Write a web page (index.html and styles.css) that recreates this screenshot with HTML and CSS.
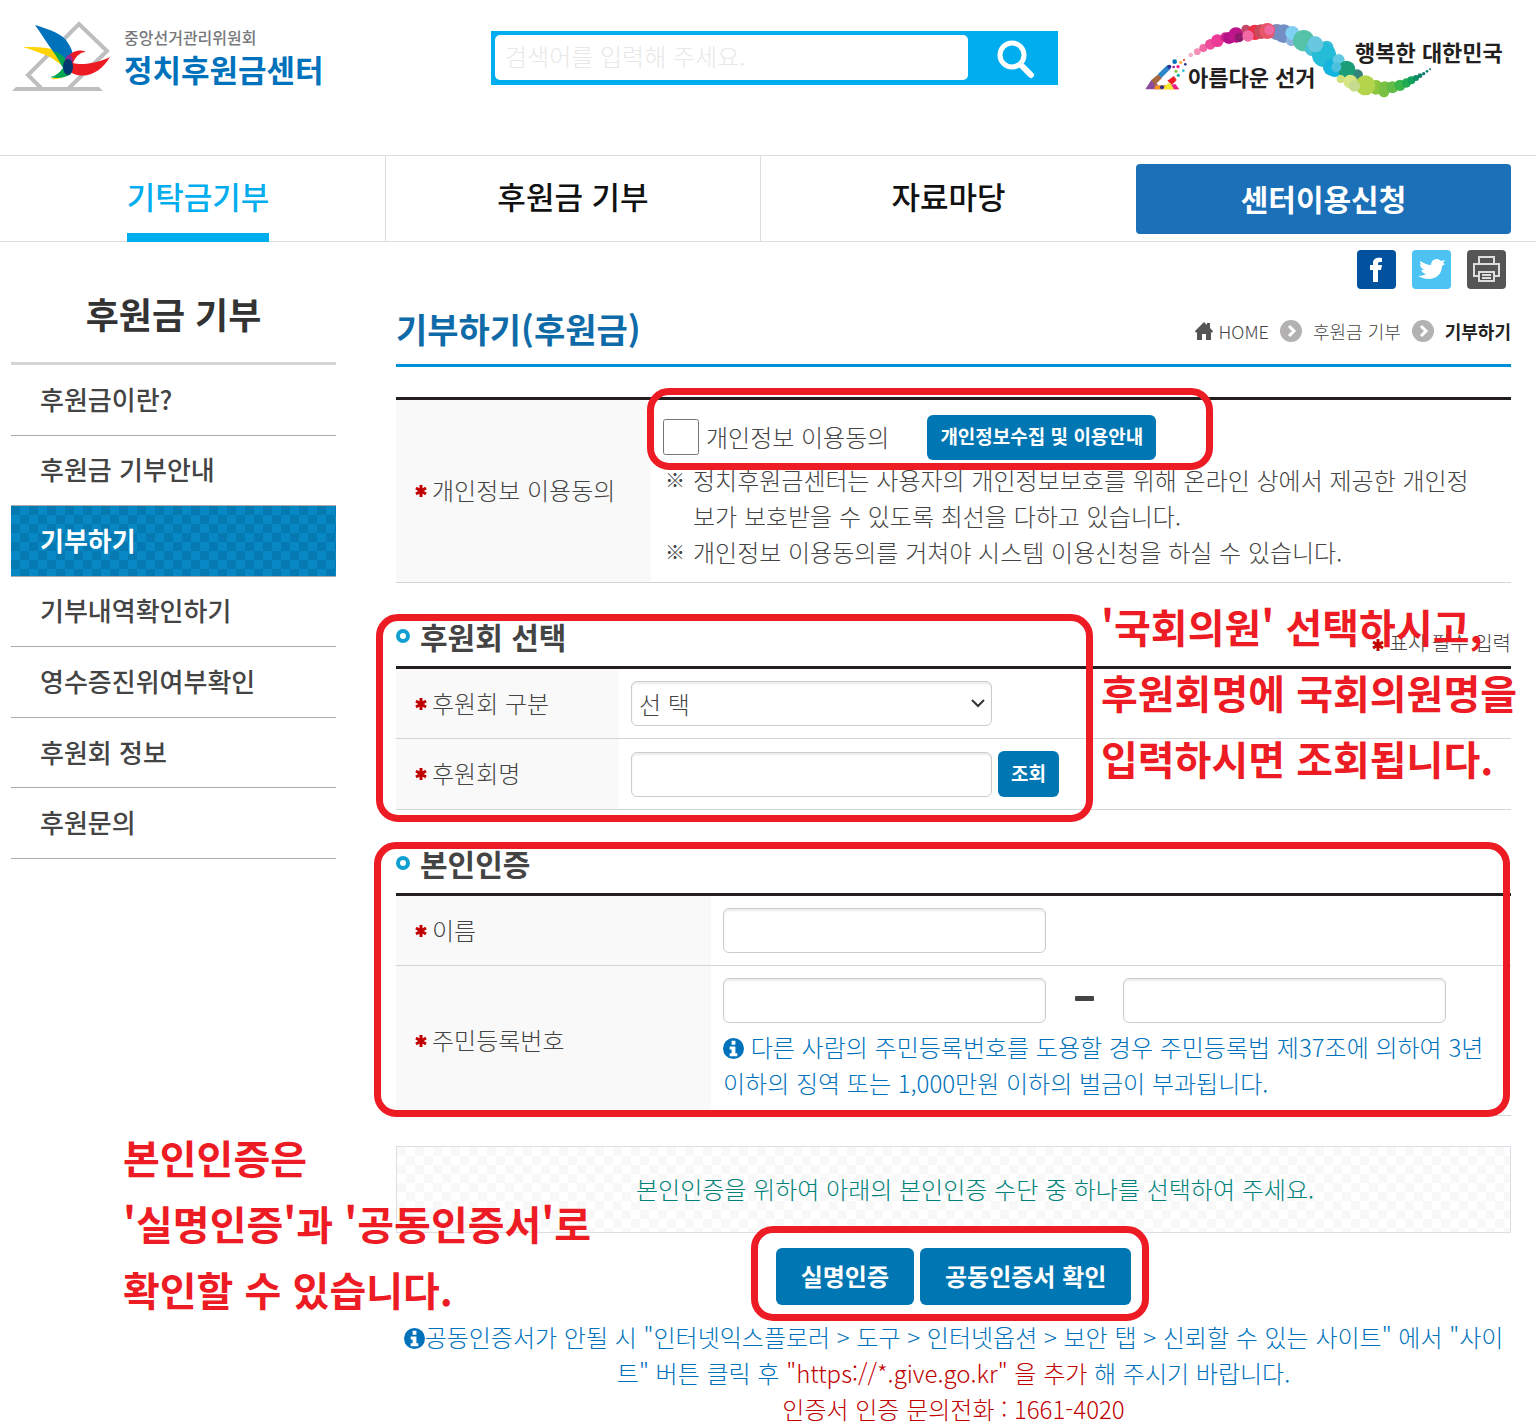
FILE: index.html
```
<!DOCTYPE html>
<html lang="ko">
<head>
    <meta charset="UTF-8">
    <meta name="viewport" content="width=device-width, initial-scale=1.0">
    <title>정치후원금센터 - 기부하기</title>
    <link rel="stylesheet" href="styles.css">
</head>
<body>
    <!-- 공통 아이콘 -->
    <svg class="symbols" aria-hidden="true">
        <symbol id="ico-star" viewBox="0 0 14 14">
            <path d="M7 1v12M2 4l10 6M12 4L2 10" stroke="#c00000" stroke-width="3" fill="none"/>
        </symbol>
        <symbol id="ico-info" viewBox="0 0 22 22">
            <circle cx="11" cy="11" r="11" fill="#0072bc"/>
            <path d="M9 3h4v4H9zM7 9h6v7h2v3H7v-3h2v-4H7z" fill="#fff"/>
        </symbol>
        <symbol id="ico-next" viewBox="0 0 22 22">
            <circle cx="11" cy="11" r="11" fill="#b3b1b2"/>
            <path d="M9 6l5 5-5 5" stroke="#fff" stroke-width="3" fill="none"/>
        </symbol>
        <symbol id="ico-ring" viewBox="0 0 14 14">
            <circle cx="7" cy="7" r="5" stroke="#0f9fd0" stroke-width="4" fill="#fff"/>
        </symbol>
    </svg>

    <header class="header">
        <a class="logo" href="#">
            <svg width="101" height="74" viewBox="10 20 101 74" aria-hidden="true">
                <path d="M40 88L27 75 78 24l28 27-38 37" fill="none" stroke="#bdbec0" stroke-width="4"/>
                <path d="M11 91l4-4h83l4 4z" fill="#bdbec0"/>
                <path d="M22 47c14 0 26 0 34 4 7 4 10 9 11 17-5-1-10-6-18-11-8-4-18-7-27-10z" fill="#ffd400"/>
                <path d="M34 25c16 5 28 9 33 18 4 6 5 10 5 15l-8 10c-3-6-8-11-13-18-6-8-11-17-17-25z" fill="#0072bc"/>
                <path d="M50 79c6 1 12-1 18-6l-5-4c-3 5-7 8-13 10z" fill="#ffd400"/>
                <path d="M49 77c6-1 9-4 13-9-3-5-5-10-10-17 8 2 13 7 15 13l3 10c-6 4-14 5-21 3z" fill="#00a651"/>
                <path d="M65 60c3-7 12-12 20-8-6 0-10 4-13 11 10 3 27-1 37-6-8 14-22 22-36 17-6-2-8-8-8-14z" fill="#ed1c24"/>
                <path d="M66 56c3-3 6 0 6 6-4-1-6 0-9 4 0-4 1-7 3-10z" fill="#92278f"/>
                <ellipse cx="67" cy="67" rx="5" ry="8" fill="#003a70"/>
            </svg>
            <span class="logo-text">
                <span class="logo-org">중앙선거관리위원회</span>
                <strong class="logo-name">정치후원금센터</strong>
            </span>
        </a>

        <form class="search">
            <input type="text" aria-label="검색어" placeholder="검색어를 입력해 주세요.">
            <button type="button" aria-label="검색">
                <svg width="40" height="40" viewBox="0 0 40 40">
                    <circle cx="16" cy="16" r="12" fill="none" stroke="#fff" stroke-width="5"/>
                    <path d="M25 26l10 10" stroke="#fff" stroke-width="6" stroke-linecap="round"/>
                </svg>
            </button>
        </form>

        <svg class="slogan" width="381" height="100" viewBox="0 0 381 100">
            <svg width="381" height="100" viewBox="0 0 1143 300">
                <circle cx="182" cy="135" r="7" fill="#f7b2cf"/>
                <circle cx="202" cy="125" r="10" fill="#f48fb8"/>
                <circle cx="220" cy="114" r="12" fill="#f26aa5"/>
                <circle cx="241" cy="103" r="16" fill="#ee4b9b"/>
                <circle cx="262" cy="92" r="19" fill="#ec3a96"/>
                <circle cx="286" cy="82" r="15" fill="#d4268c"/>
                <circle cx="297" cy="84" r="18" fill="#b5128a"/>
                <circle cx="318" cy="75" r="23" fill="#c0148c"/>
                <circle cx="328" cy="82" r="14" fill="#8e1a6b"/>
                <circle cx="348" cy="58" r="14" fill="#c2486a"/>
                <circle cx="375" cy="67" r="23" fill="#ee2f45"/>
                <circle cx="354" cy="78" r="17" fill="#f26aa5"/>
                <circle cx="394" cy="65" r="22" fill="#c94a5c"/>
                <circle cx="440" cy="66" r="24" fill="#8088b8"/>
                <circle cx="412" cy="63" r="24" fill="#ea5468"/>
                <circle cx="418" cy="60" r="15" fill="#f068a0"/>
                <circle cx="461" cy="71" r="28" fill="#728ec2"/>
                <circle cx="484" cy="92" r="16" fill="#8cb2e0"/>
                <circle cx="487" cy="69" r="21" fill="#80d0f4"/>
                <circle cx="521" cy="92" r="32" fill="#55c3a8"/>
                <circle cx="545" cy="118" r="20" fill="#48c0d8"/>
                <circle cx="590" cy="112" r="20" fill="#38bcd8"/>
                <circle cx="582" cy="135" r="36" fill="#25bcd8"/>
                <circle cx="556" cy="103" r="24" fill="#68c8e0"/>
                <circle cx="604" cy="172" r="25" fill="#18b4dc"/>
                <circle cx="615" cy="175" r="26" fill="#12b5df"/>
                <circle cx="626" cy="150" r="18" fill="#62c9e2"/>
                <circle cx="682" cy="195" r="17" fill="#36857c"/>
                <circle cx="650" cy="178" r="26" fill="#1b9e77"/>
                <circle cx="619" cy="172" r="15" fill="#4bc0df"/>
                <circle cx="632" cy="207" r="12" fill="#cfe07a"/>
                <circle cx="661" cy="215" r="21" fill="#d8e583"/>
                <circle cx="738" cy="232" r="22" fill="#8cc63f"/>
                <circle cx="706" cy="226" r="30" fill="#b4d44c"/>
                <circle cx="673" cy="228" r="17" fill="#c5dc90"/>
                <circle cx="762" cy="246" r="16" fill="#79c143"/>
                <circle cx="765" cy="232" r="18" fill="#78c043"/>
                <circle cx="787" cy="232" r="18" fill="#62bb46"/>
                <circle cx="810" cy="226" r="17" fill="#39b54a"/>
                <circle cx="829" cy="219" r="14" fill="#22aa50"/>
                <circle cx="844" cy="211" r="12" fill="#12a15c"/>
                <circle cx="858" cy="204" r="9" fill="#0c8f62"/>
                <circle cx="870" cy="197" r="7" fill="#0b8069"/>
                <circle cx="881" cy="191" r="5" fill="#0b7a70"/>
                <circle cx="891" cy="184" r="4" fill="#0b7a70"/>
                <circle cx="900" cy="178" r="3" fill="#0b7a70"/>
                <path d="M46 238l18-28 14 8 16 20z" fill="#8b4a9c"/>
                <path d="M64 210l22-18 10 12-22 22z" fill="#a5673f"/>
                <path d="M84 192l28-27 10 11-28 28z" fill="#2a86c8"/>
                <path d="M76 226h50l22 12H72z" fill="#f7941d"/>
                <path d="M98 238l18-20 14 10 8 10z" fill="#f5e72a"/>
                <path d="M112 212l20-14 8 12-14 14z" fill="#ed1c24"/>
                <path d="M124 224l12-2 12 16h-16z" fill="#ec1c8c"/>
                <circle cx="96" cy="232" r="6" fill="#2e3192"/>
                <circle cx="134" cy="155" r="7" fill="#0072bc"/>
                <circle cx="118" cy="170" r="6" fill="#2e3192"/>
                <circle cx="131" cy="171" r="4" fill="#92278f"/>
                <circle cx="144" cy="170" r="5" fill="#ec1c8c"/>
                <circle cx="152" cy="157" r="5" fill="#fbb040"/>
                <circle cx="162" cy="150" r="3" fill="#ed1c24"/>
                <circle cx="166" cy="163" r="4" fill="#2e3192"/>
                <circle cx="138" cy="184" r="5" fill="#8cc63f"/>
                <circle cx="160" cy="182" r="4" fill="#27c4d8"/>
                <circle cx="145" cy="196" r="5" fill="#12b5a5"/>
            </svg>
            <text x="58" y="76">아름다운 선거</text>
            <text x="225" y="51">행복한 대한민국</text>
        </svg>
    </header>

    <nav class="gnb">
        <a class="on" href="#"><span>기탁금기부</span></a>
        <a href="#"><span>후원금 기부</span></a>
        <a href="#"><span>자료마당</span></a>
        <a class="apply" href="#">센터이용신청</a>
    </nav>

    <div class="wrap">
        <aside class="side">
            <h2>후원금 기부</h2>
            <ul class="lnb">
                <li><a href="#">후원금이란?</a></li>
                <li><a href="#">후원금 기부안내</a></li>
                <li class="on"><a href="#">기부하기</a></li>
                <li><a href="#">기부내역확인하기</a></li>
                <li><a href="#">영수증진위여부확인</a></li>
                <li><a href="#">후원회 정보</a></li>
                <li><a href="#">후원문의</a></li>
            </ul>
            <p class="guide guide-auth">본인인증은<br>'실명인증'과 '공동인증서'로<br>확인할 수 있습니다.</p>
        </aside>

        <main class="content">
            <div class="share">
                <a href="#" aria-label="페이스북">
                    <svg width="39" height="39" viewBox="0 0 39 39">
                        <rect width="39" height="39" rx="4" fill="#00529f"/>
                        <path d="M16 32V20h-3v-5h3v-2c0-4 3-6 9-5v4c-3 0-4 0-4 2v1h4l-1 5h-3v12z" fill="#fff"/>
                    </svg>
                </a>
                <a href="#" aria-label="트위터">
                    <svg width="39" height="39" viewBox="0 0 39 39">
                        <rect width="39" height="39" rx="4" fill="#4cc3f3"/>
                        <path d="M8 11c4 2 7 4 11 4 0-4 3-6 6-6 2 0 3 1 4 2l4-1-2 3 2 1-3 2c0 8-6 13-13 13-4 0-7-1-11-3 4 0 6-1 8-2-3-1-4-2-5-4h3c-3-2-4-4-4-6l2 1c-2-1-2-3-2-4z" fill="#fff"/>
                    </svg>
                </a>
                <a href="#" aria-label="인쇄">
                    <svg width="39" height="39" viewBox="0 0 39 39" fill="none" stroke="#ddd" stroke-width="2">
                        <rect width="39" height="39" rx="4" fill="#555" stroke="none"/>
                        <path d="M12 14V7h15v7M11 26H7V14h25v12h-4M12 22h15v9H12zM15 25h9M15 28h9"/>
                    </svg>
                </a>
            </div>

            <div class="title">
                <h1>기부하기(후원금)</h1>
                <div class="location">
                    <svg width="18" height="18" viewBox="0 0 18 18"><path d="M9 0l3 3V1h3v5l3 3-1 2-1-1v8h-5v-6H7v6H2v-8l-1 1-1-2z" fill="#555"/></svg>
                    <a href="#">HOME</a>
                    <svg class="arrow" width="22" height="22"><use href="#ico-next"/></svg>
                    <a href="#">후원금 기부</a>
                    <svg class="arrow" width="22" height="22"><use href="#ico-next"/></svg>
                    <strong>기부하기</strong>
                </div>
            </div>

            <section class="panel agree">
                <table>
                    <tr>
                        <th scope="row"><svg class="star" width="14" height="14"><use href="#ico-star"/></svg>개인정보 이용동의</th>
                        <td>
                            <div class="agree-row">
                                <input type="checkbox" id="agree">
                                <label for="agree">개인정보 이용동의</label>
                                <button type="button" class="btn">개인정보수집 및 이용안내</button>
                            </div>
                            <ul class="notes">
                                <li><span class="bullet">※</span><span>정치후원금센터는 사용자의 개인정보보호를 위해 온라인 상에서 제공한 개인정보가 보호받을 수 있도록 최선을 다하고 있습니다.</span></li>
                                <li><span class="bullet">※</span><span>개인정보 이용동의를 거쳐야 시스템 이용신청을 하실 수 있습니다.</span></li>
                            </ul>
                        </td>
                    </tr>
                </table>
                <div class="mark"></div>
            </section>

            <section class="panel support">
                <div class="panel-head">
                    <h2><svg width="14" height="14"><use href="#ico-ring"/></svg>후원회 선택</h2>
                    <p><svg class="star" width="14" height="14"><use href="#ico-star"/></svg>표시 필수 입력</p>
                </div>
                <table>
                    <tr>
                        <th scope="row"><svg class="star" width="14" height="14"><use href="#ico-star"/></svg><label for="groupType">후원회 구분</label></th>
                        <td>
                            <div class="field">
                                <div class="select">
                                    <select id="groupType">
                                        <option>선 택</option>
                                    </select>
                                    <svg width="16" height="10" viewBox="0 0 16 10"><path d="M2 2l6 6 6-6" fill="none" stroke="#333" stroke-width="2"/></svg>
                                </div>
                            </div>
                        </td>
                    </tr>
                    <tr>
                        <th scope="row"><svg class="star" width="14" height="14"><use href="#ico-star"/></svg><label for="groupName">후원회명</label></th>
                        <td>
                            <div class="field">
                                <input type="text" id="groupName">
                                <button type="button" class="btn">조회</button>
                            </div>
                        </td>
                    </tr>
                </table>
                <div class="mark"></div>
                <p class="guide guide-support">'국회의원' 선택하시고,<br>후원회명에 국회의원명을<br>입력하시면 조회됩니다.</p>
            </section>

            <section class="panel auth">
                <div class="panel-head">
                    <h2><svg width="14" height="14"><use href="#ico-ring"/></svg>본인인증</h2>
                </div>
                <table>
                    <tr>
                        <th scope="row"><svg class="star" width="14" height="14"><use href="#ico-star"/></svg><label for="userName">이름</label></th>
                        <td>
                            <div class="field">
                                <input type="text" id="userName">
                            </div>
                        </td>
                    </tr>
                    <tr>
                        <th scope="row"><svg class="star" width="14" height="14"><use href="#ico-star"/></svg><label for="jumin1">주민등록번호</label></th>
                        <td>
                            <div class="field">
                                <input type="text" id="jumin1">
                                <span class="dash"></span>
                                <input type="text" id="jumin2" aria-label="주민등록번호 뒷자리">
                            </div>
                            <p class="info"><svg width="21" height="21"><use href="#ico-info"/></svg> 다른 사람의 주민등록번호를 도용할 경우 주민등록법 제37조에 의하여 3년<br>이하의 징역 또는 1,000만원 이하의 벌금이 부과됩니다.</p>
                        </td>
                    </tr>
                </table>
                <div class="mark"></div>
            </section>

            <p class="check-box">본인인증을 위하여 아래의 본인인증 수단 중 하나를 선택하여 주세요.</p>

            <div class="buttons">
                <div class="button-group">
                    <button type="button" class="btn btn-large">실명인증</button>
                    <button type="button" class="btn btn-large">공동인증서 확인</button>
                    <div class="mark"></div>
                </div>
            </div>

            <p class="info bottom-info"><svg width="21" height="21"><use href="#ico-info"/></svg>공동인증서가 안될 시 "인터넷익스플로러 &gt; 도구 &gt; 인터넷옵션 &gt; 보안 탭 &gt; 신뢰할 수 있는 사이트" 에서 "사이<br>트" 버튼 클릭 후 <em>"https://*.give.go.kr" 을 추가</em> 해 주시기 바랍니다.<br><em>인증서 인증 문의전화 : 1661-4020</em></p>
        </main>
    </div>
</body>
</html>
```
FILE: styles.css
```
:root {
    --red: #ed1c24;
    --blue: #0077b3;
    --sky: #00aeef;
    --text: #444;
    --line: #d5d5d5;
}

* {
    box-sizing: border-box;
}

body {
    margin: 0;
    font-family: "Noto Sans CJK KR", "Noto Sans", sans-serif;
    font-size: 24px;
    font-weight: 300;
    line-height: 36px;
    color: var(--text);
    background: #fff;
    overflow-x: hidden;
}

h1, h2, p, ul {
    margin: 0;
    padding: 0;
}

ul {
    list-style: none;
}

a {
    color: inherit;
    text-decoration: none;
}

strong {
    font-weight: 700;
}

em {
    font-style: normal;
    color: #c00000;
}

input, select, button {
    font: inherit;
    color: inherit;
    margin: 0;
}

.symbols {
    display: none;
}

/* 헤더 */
.header {
    display: grid;
    grid-template-columns: 480px minmax(300px, 567px) 1fr;
    align-items: start;
    height: 155px;
    padding: 0 25px 0 11px;
}

.logo {
    display: flex;
    gap: 12px;
    padding-top: 20px;
}

.logo-text {
    display: flex;
    flex-direction: column;
    padding-top: 5px;
}

.logo-org {
    font-size: 16px;
    font-weight: 500;
    line-height: 24px;
    color: #77787b;
}

.logo-name {
    font-size: 31px;
    line-height: 40px;
    color: #0072bc;
}

.search {
    display: flex;
    margin-top: 31px;
    height: 54px;
    padding: 4px;
    background: var(--sky);
}

.search input {
    flex: 1;
    min-width: 0;
    height: 45px;
    padding: 0 10px 4px;
    border: 0;
    border-radius: 5px;
    background: #fff;
}

.search input::placeholder {
    color: #e8e8e8;
    opacity: 1;
}

.search button {
    width: 86px;
    padding: 4px 0 0 10px;
    border: 0;
    background: none;
    cursor: pointer;
}

.slogan {
    justify-self: end;
    margin-top: 10px;
}

.slogan text {
    font-size: 22px;
    font-weight: 700;
    fill: #231f20;
}

/* 상단 메뉴 */
.gnb {
    display: grid;
    grid-template-columns: repeat(4, 1fr);
    height: 87px;
    padding: 0 25px 0 11px;
    border-top: 1px solid #ddd;
    border-bottom: 1px solid #ddd;
    font-size: 31px;
    font-weight: 500;
    color: #111;
}

.gnb a {
    text-align: center;
    border-right: 1px solid #ddd;
    line-height: 80px;
}

.gnb a:nth-child(3) {
    border-right: 0;
}

.gnb .on {
    color: var(--sky);
}

.gnb .on span {
    display: inline-block;
    height: 86px;
    border-bottom: 9px solid var(--sky);
}

.gnb .apply {
    margin: 8px 0;
    border: 0;
    border-radius: 4px;
    background: #1b70b8;
    color: #fff;
    font-size: 30px;
    font-weight: 700;
    line-height: 69px;
}

.wrap {
    display: grid;
    grid-template-columns: 325px minmax(0, 1fr);
    gap: 60px;
    padding: 0 25px 0 11px;
}

/* 왼쪽 메뉴 */
.side h2 {
    padding: 39px 0 17px;
    border-bottom: 3px solid #d5d5d5;
    font-size: 36px;
    line-height: 64px;
    text-align: center;
    color: #333;
}

.lnb {
    display: grid;
    grid-auto-rows: 1fr;
    height: 494px;
}

.lnb li {
    display: flex;
    align-items: center;
    padding-bottom: 2px;
    border-bottom: 1px solid #aaa;
    font-size: 26px;
    font-weight: 500;
}

.lnb a {
    flex: 1;
    padding-left: 29px;
}

.lnb .on {
    color: #fff;
    font-weight: 700;
    background: repeating-conic-gradient(#0787c3 0 25%, #057ab2 0 50%) 0 0 / 18px 18px;
}

/* 본문 */
.content {
    padding-top: 8px;
}

.share {
    display: flex;
    justify-content: flex-end;
    gap: 16px;
    height: 39px;
    padding-right: 5px;
}

.share svg {
    display: block;
}

.title {
    display: flex;
    justify-content: space-between;
    align-items: center;
    padding: 7px 0 2px;
    border-bottom: 3px solid #0090d9;
}

.title h1 {
    font-size: 34px;
    line-height: 66px;
    color: #0f6ba8;
}

.location {
    display: flex;
    align-items: center;
    gap: 6px;
    padding-top: 4px;
    font-size: 18px;
}

.location .arrow {
    margin: 0 5px;
}

.location strong {
    color: #222;
}

.panel {
    position: relative;
    margin-top: 30px;
}

.panel-head {
    display: flex;
    justify-content: space-between;
    align-items: flex-start;
    height: 53px;
}

.panel-head h2 {
    display: flex;
    align-items: center;
    gap: 10px;
    font-size: 30px;
    line-height: 46px;
}

.panel-head p {
    padding-top: 12px;
    font-size: 20px;
}

.star {
    margin-right: 4px;
    vertical-align: 2px;
}

.panel-head .star {
    vertical-align: -1px;
}

table {
    width: 100%;
    border-top: 3px solid #231f20;
    border-spacing: 0;
    table-layout: fixed;
}

th, td {
    padding: 12px;
    border-bottom: 1px solid var(--line);
    text-align: left;
}

th {
    width: 255px;
    padding: 10px 0 12px 18px;
    background: #f9f9f9;
    font-weight: 300;
}

.support th {
    width: 223px;
}

.auth th {
    width: 315px;
}

.agree-row {
    display: flex;
    align-items: center;
    height: 50px;
}

.agree-row input {
    width: 36px;
    height: 36px;
    margin-right: 7px;
}

.agree-row .btn {
    margin-left: 38px;
}

.notes li {
    display: grid;
    grid-template-columns: 30px minmax(0, 1fr);
    padding-right: 12px;
}

.notes .bullet {
    padding-left: 2px;
    font-size: 20px;
}

.field {
    display: flex;
    align-items: center;
    min-height: 45px;
}

.field input, .field select {
    width: 361px;
    height: 45px;
    padding: 0 7px;
    border: 1px solid #ccc;
    border-radius: 6px;
    background: #fff;
    box-shadow: inset 0 2px 2px rgba(0, 0, 0, 0.08);
}

.auth .field input {
    width: 323px;
}

.select {
    position: relative;
}

.select select {
    display: block;
    appearance: none;
}

.select svg {
    position: absolute;
    top: 17px;
    right: 6px;
    pointer-events: none;
}

.dash {
    width: 19px;
    height: 5px;
    margin: 0 29px 4px;
    border-radius: 1px;
    background: #444;
}

.btn {
    height: 45px;
    padding: 0 13px 2px;
    border: 0;
    border-radius: 6px;
    background: var(--blue);
    color: #fff;
    font-size: 19px;
    font-weight: 700;
    cursor: pointer;
}

.field .btn {
    height: 46px;
    margin-left: 6px;
}

.btn-large {
    height: 57px;
    padding: 0 25px 2px;
    font-size: 24px;
}

.info {
    padding: 6px 0 2px;
    color: #0072bc;
}

.info svg {
    vertical-align: -2px;
}

.check-box {
    margin-top: 30px;
    padding: 24px 0 25px 43px;
    border: 1px solid #dddde6;
    background: repeating-conic-gradient(#fff 0 25%, #f8f8f8 0 50%) 0 0 / 18px 18px;
    text-align: center;
    color: #00827a;
}

.buttons {
    display: flex;
    justify-content: center;
    margin-top: 15px;
}

.button-group {
    position: relative;
    display: flex;
    gap: 6px;
}

.bottom-info {
    margin-top: 14px;
    padding: 0;
    text-align: center;
}

/* 안내용 빨간 표시 */
.mark {
    position: absolute;
    border: 7px solid var(--red);
    border-radius: 22px;
    pointer-events: none;
}

.agree .mark {
    top: -9px;
    left: 251px;
    width: 566px;
    height: 82px;
}

.support .mark {
    top: 1px;
    left: -20px;
    width: 717px;
    height: 208px;
}

.auth .mark {
    top: 2px;
    left: -22px;
    right: 1px;
    bottom: -1px;
}

.button-group .mark {
    inset: -22px -18px -16px -25px;
}

.guide {
    font-size: 40px;
    font-weight: 700;
    line-height: 66px;
    color: var(--red);
    white-space: nowrap;
}

.guide-auth {
    position: relative;
    z-index: 1;
    margin: 265px 0 0 112px;
}

.guide-support {
    position: absolute;
    top: -20px;
    left: 705px;
}
```
